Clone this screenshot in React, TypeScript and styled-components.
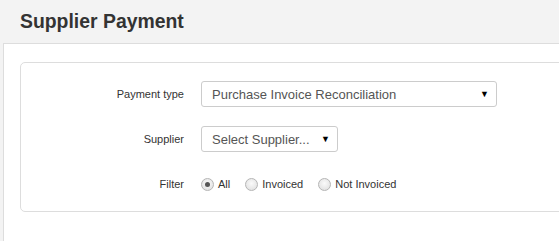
import React from "react";
import styled, { createGlobalStyle } from "styled-components";

const GlobalStyle = createGlobalStyle`
  html, body {
    margin: 0;
    padding: 0;
    background: #f3f3f3;
    font-family: "Liberation Sans", Arial, sans-serif;
  }
`;

const Page = styled.div`
  width: 559px;
  height: 241px;
  overflow: hidden;
  background: #f3f3f3;
`;

const Header = styled.header`
  height: 43px;
  padding: 0 0 0 20px;
  display: flex;
  align-items: center;
`;

const Title = styled.h1`
  margin: 0 0 1px;
  font-size: 19.4px;
  font-weight: 700;
  color: #333;
`;

const Panel = styled.section`
  margin-left: 3px;
  width: 600px;
  height: 220px;
  background: #fff;
  border-top: 1px solid #ddd;
  border-left: 1px solid #ddd;
  padding: 18px 0 0 16px;
  box-sizing: border-box;
`;

const Well = styled.div`
  width: 620px;
  height: 150px;
  box-sizing: border-box;
  border: 1px solid #ddd;
  border-radius: 5px;
  padding: 18px 0 0 0;
  display: flex;
  flex-direction: column;
  gap: 19px;
`;

const Row = styled.div`
  display: grid;
  grid-template-columns: 163px auto;
  column-gap: 17px;
  align-items: center;
  height: 26px;
`;

const Label = styled.label`
  text-align: right;
  font-size: 11px;
  color: #333;
`;

const Select = styled.div<{ $w: number }>`
  width: ${(p) => p.$w}px;
  height: 26px;
  box-sizing: border-box;
  border: 1px solid #ccc;
  border-radius: 3px;
  display: flex;
  align-items: center;
  justify-content: space-between;
  padding: 0 7px 0 10px;
  font-size: 13px;
  color: #555;
  background: #fff;
`;

const Arrow = styled.span`
  font-size: 9px;
  color: #000;
`;

const Radios = styled.div`
  display: flex;
  align-items: center;
  font-size: 11px;
  color: #333;
`;

const Option = styled.span`
  display: flex;
  align-items: center;
  margin-right: 15px;
  gap: 4px;
`;

const Dot = styled.span<{ $on?: boolean }>`
  width: 11px;
  height: 11px;
  border-radius: 50%;
  border: 1px solid #b5b5b5;
  background: radial-gradient(circle at 50% 40%, #fafafa, #dcdcdc);
  display: flex;
  align-items: center;
  justify-content: center;
  &::after {
    content: "";
    width: 5px;
    height: 5px;
    border-radius: 50%;
    background: ${(p) => (p.$on ? "#555" : "transparent")};
  }
`;

export default function App() {
  return (
    <Page>
      <GlobalStyle />
      <Header>
        <Title>Supplier Payment</Title>
      </Header>
      <Panel>
        <Well>
          <Row>
            <Label>Payment type</Label>
            <Select $w={296}>
              Purchase Invoice Reconciliation
              <Arrow>▼</Arrow>
            </Select>
          </Row>
          <Row>
            <Label>Supplier</Label>
            <Select $w={137}>
              Select Supplier...
              <Arrow>▼</Arrow>
            </Select>
          </Row>
          <Row>
            <Label>Filter</Label>
            <Radios>
              <Option>
                <Dot $on />
                All
              </Option>
              <Option>
                <Dot />
                Invoiced
              </Option>
              <Option>
                <Dot />
                Not Invoiced
              </Option>
            </Radios>
          </Row>
        </Well>
      </Panel>
    </Page>
  );
}
